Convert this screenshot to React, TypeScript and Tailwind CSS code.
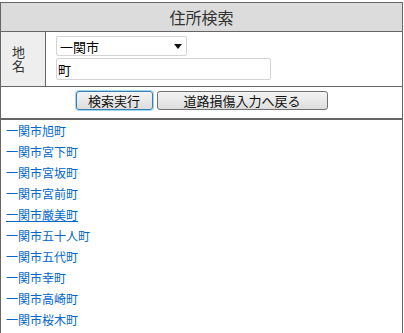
import { useState } from "react";

const towns = [
  "一関市旭町",
  "一関市宮下町",
  "一関市宮坂町",
  "一関市宮前町",
  "一関市厳美町",
  "一関市五十人町",
  "一関市五代町",
  "一関市幸町",
  "一関市高崎町",
  "一関市桜木町",
];

const font = "font-['Noto_Sans_CJK_JP','Noto_Sans',sans-serif]";

export default function App() {
  const [town, setTown] = useState("町");

  return (
    <div className={`${font} h-[333px] w-[404px] overflow-hidden bg-white pt-[2px] text-[#222]`}>
      <div className="flex h-[340px] w-[403px] flex-col border-x border-t border-[#666]">
        <div className="flex h-[29px] shrink-0 items-center justify-center border-b border-[#666] bg-[#dcdcdc] text-[16px] leading-none text-[#333]">
          住所検索
        </div>

        <div className="flex h-[55px] shrink-0 border-b border-[#666]">
          <div className="flex w-[45px] shrink-0 items-center border-r border-[#666] bg-[#eeeeee] pl-[11px] text-[13px] leading-[14px] text-[#333]">
            <span className="w-[13px] break-all">地名</span>
          </div>
          <div className="flex flex-col gap-[2px] pl-[10px] pt-[4px]">
            <div className="relative flex h-[20px] w-[131px] items-center rounded-[2px] border border-[#d4d4d4] bg-white pl-[3px] text-[13px] leading-none text-black">
              一関市
              <svg className="absolute right-[4px] top-[7px]" width="8" height="5" viewBox="0 0 8 5">
                <path d="M0 0h8L4 5z" fill="#111" />
              </svg>
            </div>
            <input
              value={town}
              onChange={(e) => setTown(e.target.value)}
              className="h-[22px] w-[215px] rounded-[2px] border border-[#d4d4d4] bg-white px-[1px] text-[13px] leading-none text-black outline-none"
            />
          </div>
        </div>

        <div className="flex h-[33px] shrink-0 items-start justify-center gap-[4px] border-b-2 border-[#666] pt-[4px]">
          <button className="flex h-[19px] w-[77px] items-center justify-center rounded-[3px] border border-[#3c7fb1] bg-gradient-to-b from-[#f4f4f4] to-[#dddddd] text-[13px] leading-none text-[#111] shadow-[0_0_0_1px_#9fd5ef]">
            検索実行
          </button>
          <button className="flex h-[19px] w-[171px] items-center justify-center rounded-[3px] border border-[#707070] bg-gradient-to-b from-[#f4f4f4] to-[#dddddd] text-[13px] leading-none text-[#111]">
            道路損傷入力へ戻る
          </button>
        </div>

        <ul className="flex flex-col">
          {towns.map((t) => (
            <li key={t} className="pl-[5px] text-[12px] leading-[21px]">
              <a
                href="#"
                className={`text-[#0066cc] ${t === "一関市厳美町" ? "underline" : "no-underline"}`}
              >
                {t}
              </a>
            </li>
          ))}
        </ul>
      </div>
    </div>
  );
}
